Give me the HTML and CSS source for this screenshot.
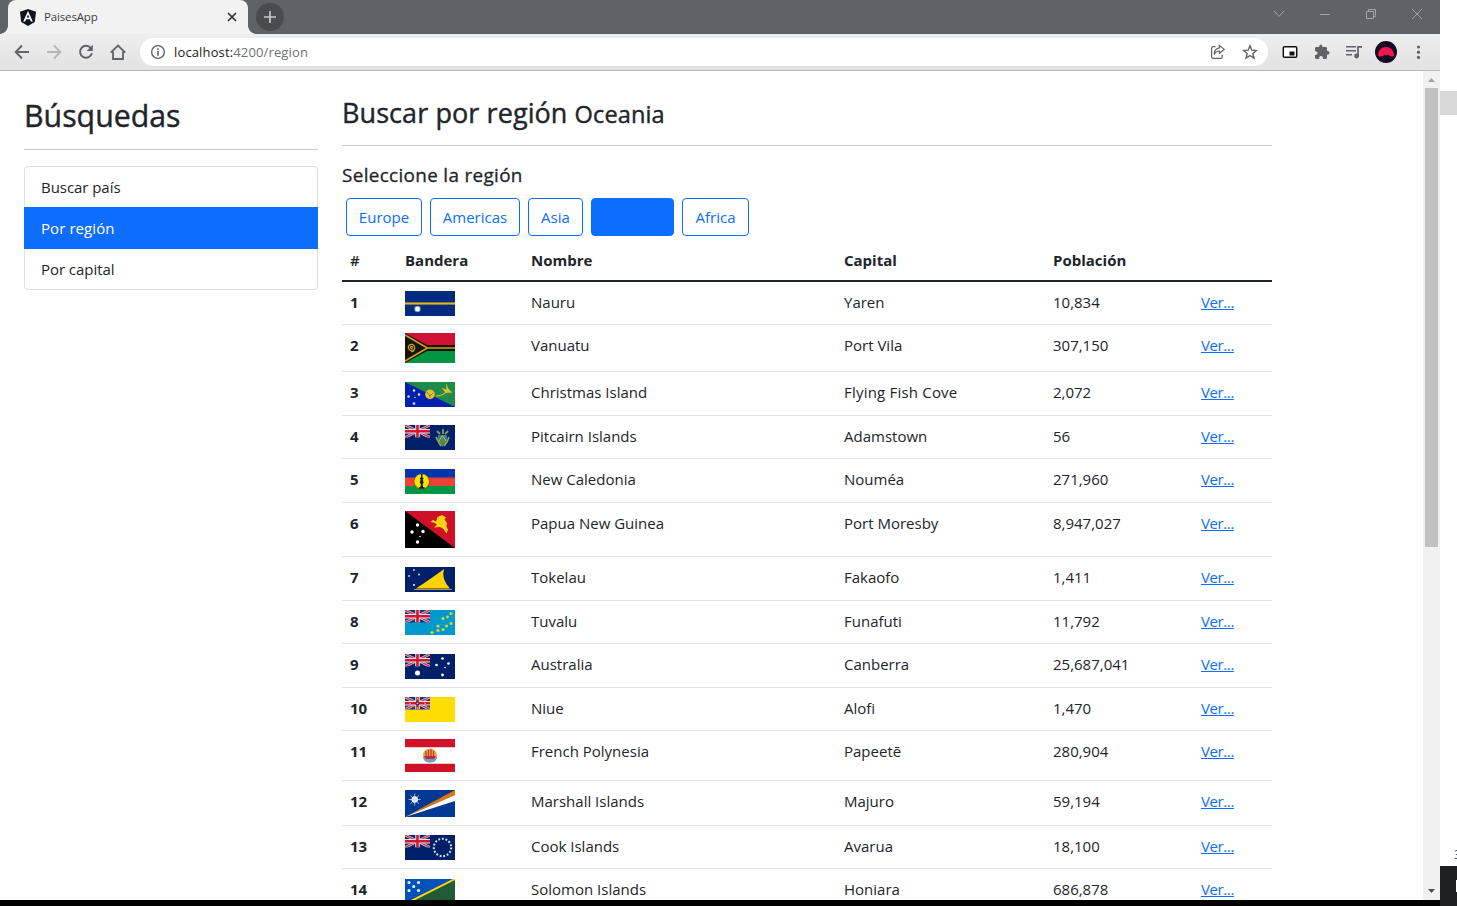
FILE: index.html
```html
<!DOCTYPE html>
<html lang="es">
<head>
<meta charset="utf-8">
<title>PaisesApp</title>
<link rel="stylesheet" href="styles.css">
</head>
<body>
<svg class="defs" width="0" height="0">
  <symbol id="jack" viewBox="0 0 25 13" preserveAspectRatio="none">
    <path d="M0 0L25 13M25 0L0 13" stroke="#c9cde0" stroke-width="2.8"/>
    <path d="M0 0L25 13M25 0L0 13" stroke="#d2304c" stroke-width="1.2"/>
    <path d="M12.5 0V13M0 6.5H25" stroke="#f3dfe6" stroke-width="4.6"/>
    <path d="M12.5 0V13M0 6.5H25" stroke="#d01732" stroke-width="2.6"/>
  </symbol>
</svg>
<div class="window">
  <div class="tabbar">
    <div class="tab">
      <svg width="16" height="17" viewBox="0 0 16 17"><path d="M8 0L16 2.8L14.8 13L8 17L1.2 13L0 2.8Z" fill="#10151d"/><path d="M8 2L3.2 12.6H5.2L6.1 10.2H9.9L10.8 12.6H12.8ZM8 5.5L9.3 8.6H6.7Z" fill="#fff" fill-rule="evenodd"/></svg>
      <span class="tab-title">PaisesApp</span>
      <svg class="tab-close" width="10" height="10" viewBox="0 0 10 10"><path d="M1 1L9 9M9 1L1 9" stroke="#2d3033" stroke-width="1.7"/></svg>
    </div>
    <div class="newtab"><svg width="12" height="12" viewBox="0 0 12 12"><path d="M6 0V12M0 6H12" stroke="#c6c8ca" stroke-width="1.7"/></svg></div>
    <div class="controls">
      <svg width="12" height="12" viewBox="0 0 12 12"><path d="M1 3L6 8.5L11 3" fill="none" stroke="#a2a5a7"/></svg>
      <svg width="12" height="12" viewBox="0 0 12 12"><path d="M1 6.5H11" stroke="#a2a5a7"/></svg>
      <svg width="12" height="12" viewBox="0 0 12 12"><path d="M1.5 3.5H8.5V10.5H1.5ZM3.5 3.5V1.5H10.5V8.5H8.5" fill="none" stroke="#a2a5a7"/></svg>
      <svg width="12" height="12" viewBox="0 0 12 12"><path d="M1 1L11 11M11 1L1 11" stroke="#a2a5a7"/></svg>
    </div>
  </div>
  <div class="toolbar">
    <svg width="16" height="16" viewBox="0 0 16 16" fill="none" stroke="#5f6368" stroke-width="1.9"><path d="M15 8H2M8 1.5L1.7 8L8 14.5"/></svg>
    <svg width="16" height="16" viewBox="0 0 16 16" fill="none" stroke="#b5b6b8" stroke-width="1.9"><path d="M1 8H14M8 1.5L14.3 8L8 14.5"/></svg>
    <svg width="16" height="16" viewBox="0 0 16 16" fill="none" stroke="#5f6368" stroke-width="1.9"><path d="M12.9 4.2A6 6 0 1 0 13.9 9.2"/><path d="M14.8 0.8V7H8.6Z" fill="#5f6368" stroke="none"/></svg>
    <svg width="16" height="16" viewBox="0 0 16 16" fill="none" stroke="#5f6368" stroke-width="1.8"><path d="M0.7 8.7L8 1.5L15.3 8.7M3 7.5V15H13V7.5"/></svg>
    <div class="omnibox">
      <svg width="16" height="16" viewBox="0 0 16 16"><circle cx="8" cy="8" r="6.4" fill="none" stroke="#5f6368" stroke-width="1.4"/><path d="M7.2 7H8.8V11.7H7.2ZM7.2 4.3H8.8V5.8H7.2Z" fill="#5f6368"/></svg>
      <span class="url">localhost:<span>4200/region</span></span>
      <svg class="share" width="16" height="16" viewBox="0 0 16 16" fill="none" stroke="#5f6368" stroke-width="1.2"><path d="M5.5 2.6H3.2Q1.6 2.6 1.6 4.2V12.7Q1.6 14.3 3.2 14.3H10.6Q12.2 14.3 12.2 12.7V10.8"/><path d="M9.4 1.5L14.2 5.4L9.4 9.2V7Q5.7 7 4.2 10.5Q4.4 4.5 9.4 3.9Z"/></svg>
      <svg class="star" width="16" height="16" viewBox="0 0 16 16" fill="none" stroke="#5f6368" stroke-width="1.4"><path d="M8 1.8L9.8 6.1L14.3 6.5L10.9 9.5L12 14L8 11.6L4 14L5.1 9.5L1.7 6.5L6.2 6.1Z"/></svg>
    </div>
    <div class="tools">
      <svg width="16" height="16" viewBox="0 0 16 16"><rect x="1.3" y="2.7" width="13.4" height="10.6" rx="1" fill="#fff" stroke="#111" stroke-width="1.5"/><rect x="7.5" y="7.5" width="5" height="4" fill="#111"/></svg>
      <svg width="16" height="16" viewBox="0 0 16 16" fill="#5f6368"><path d="M1 4.2Q1 3 2.2 3H5.2Q4.9 .5 6.8 .5Q8.8 .5 8.4 3H11.8Q13 3 13 4.2V7Q15.5 6.7 15.5 8.8Q15.5 10.9 13 10.6V13.8Q13 15 11.8 15H9Q9.2 12.1 7 12.1Q4.9 12.1 5.1 15H2.2Q1 15 1 13.8V10.9Q3.6 11 3.6 9Q3.6 7 1 7.2Z"/></svg>
      <svg width="16" height="16" viewBox="0 0 16 16"><path d="M0 2.8H10M0 6.8H10M0 10.8H6" stroke="#5f6368" stroke-width="1.6"/><path d="M12 12V2.8H16" fill="none" stroke="#5f6368" stroke-width="1.7"/><circle cx="10.6" cy="12" r="2.4" fill="#5f6368"/></svg>
      <svg width="22" height="22" viewBox="0 0 22 22"><circle cx="11" cy="11" r="11" fill="#160a23"/><path d="M3 14.5Q3.5 6 11 6Q18.5 6 19 14.5L17 15.6L14.5 14.8L13 13.6L11.5 14.4L9.5 13.8L8 15L5 15.8Z" fill="#f3164d"/></svg>
      <svg width="16" height="16" viewBox="0 0 16 16" fill="#5f6368"><circle cx="8.5" cy="3" r="1.6"/><circle cx="8.5" cy="8.2" r="1.6"/><circle cx="8.5" cy="13.4" r="1.6"/></svg>
    </div>
  </div>
  <div class="viewport">
    <div class="page">
      <aside class="sidebar">
        <h2>Búsquedas</h2>
        <hr>
        <ul class="menu"><li>Buscar país</li><li class="active">Por región</li><li>Por capital</li></ul>
      </aside>
      <main class="content">
        <h3>Buscar por región <small>Oceania</small></h3>
        <hr>
        <h5>Seleccione la región</h5>
        <div class="regions">
          <button class="w-eu">Europe</button><button class="w-am">Americas</button><button class="w-as">Asia</button><button class="w-oc selected">Oceania</button><button class="w-af">Africa</button>
        </div>
        <table>
          <colgroup><col class="c1"><col class="c2"><col class="c3"><col class="c4"><col class="c5"><col class="c6"></colgroup>
          <thead><tr><th>#</th><th>Bandera</th><th>Nombre</th><th>Capital</th><th>Población</th><th></th></tr></thead>
          <tbody>
          <tr><th>1</th><td><svg class="flag" viewBox="0 0 50 25"><path fill="#002b7f" d="M0 0H50V25H0Z"/><path fill="#8b7a45" d="M0 11H50V14H0Z"/><path fill="#e5b52c" d="M0 12H50V13H0Z"/><circle cx="12.5" cy="18" r="3.2" fill="#8497c4"/><circle cx="12.5" cy="18" r="2.3" fill="#fff"/></svg></td><td>Nauru</td><td>Yaren</td><td>10,834</td><td><a>Ver...</a></td></tr>
          <tr><th>2</th><td><svg class="flag" viewBox="0 0 50 30"><path fill="#d21034" d="M0 0H50V13H0Z"/><path fill="#009543" d="M0 17H50V30H0Z"/><path fill="#17120d" d="M0 0L22 12H50V18H22L0 30Z"/><path d="M0 2L22.5 15L0 28M22 15H50" fill="none" stroke="#c9a020" stroke-width="1.6"/><path d="M7 18Q2.8 17 3.5 13.5Q4.3 10.8 7.5 11.5Q10.2 12.6 9.5 16Q8.5 19 6 18.5M7.7 16Q5 16 6 13.7L8 14" fill="none" stroke="#d0a719" stroke-width="1.3"/></svg></td><td>Vanuatu</td><td>Port Vila</td><td>307,150</td><td><a>Ver...</a></td></tr>
          <tr><th>3</th><td><svg class="flag" viewBox="0 0 50 25"><path fill="#0021ad" d="M0 0H50V25H0Z"/><path fill="#208b49" d="M0 0H50V25Z"/><circle cx="25" cy="12.4" r="4.8" fill="#edbd28"/><path d="M22 10L25 14L28 11M25 14V16" fill="none" stroke="#64913b"/><path d="M31 14Q38 14 41.5 9.5" fill="none" stroke="#dcc03a" stroke-width="1.2"/><path d="M36.5 6L41.5 7.5L41.3 1L43.5 7L47.5 10.5L41 11Z" fill="#dcc03a"/><g fill="#dce3ff"><circle cx="9" cy="8.5" r="1.2"/><circle cx="3.5" cy="14.5" r="1.2"/><circle cx="14" cy="12.5" r="1.2"/><circle cx="9" cy="21.5" r="1.3"/><circle cx="10" cy="15.5" r=".7"/></g></svg></td><td>Christmas Island</td><td class="wide">Flying Fish Cove</td><td>2,072</td><td><a>Ver...</a></td></tr>
          <tr><th>4</th><td><svg class="flag" viewBox="0 0 50 25"><path fill="#00206a" d="M0 0H50V25H0Z"/><use href="#jack" width="25" height="12.5"/><path d="M33 10H42V17L37.5 22L33 17Z" fill="#267fa2"/><path d="M34 17L37.5 11L41 17L37.5 20Z" fill="#4d8a45"/><path d="M32 6L35 9M38 4V9M43 6L40 9M31 12L33 16L36 21M44 12L42 17L39 21" fill="none" stroke="#8c9c55" stroke-width="1.8"/><path d="M34 16L37.5 10.5L41 16" fill="none" stroke="#d4b43d"/></svg></td><td>Pitcairn Islands</td><td>Adamstown</td><td>56</td><td><a>Ver...</a></td></tr>
          <tr><th>5</th><td><svg class="flag" viewBox="0 0 50 25"><path fill="#0035ad" d="M0 0H50V9H0Z"/><path fill="#ed4135" d="M0 8.5H50V17H0Z"/><path fill="#009543" d="M0 17H50V25H0Z"/><circle cx="16.7" cy="12.5" r="7.7" fill="#fae600" stroke="#38301c" stroke-width=".5"/><path d="M16.7 5V19M15 9.5H18.4M14.8 13.5H18.6M13.8 19H19.6" stroke="#17170f" stroke-width="1.5"/><path d="M16.7 7L18.2 12L17.5 16L18.5 19H15L16 16L15.2 12Z" fill="#17170f"/></svg></td><td>New Caledonia</td><td>Nouméa</td><td>271,960</td><td><a>Ver...</a></td></tr>
          <tr><th>6</th><td><svg class="flag" viewBox="0 0 50 37"><path fill="#000" d="M0 0H50V37H0Z"/><path fill="#ce1126" d="M0 0H50V37Z"/><path fill="#fcd116" d="M25.5 11L28 9L31 10.5L32.5 6L37 4L41 6.5L39.5 8.5L42 12L41.5 16L43 18.5L41.5 22.5L38.5 18L35 16L29 16.5L32 13.5L29 11.5Z"/><g fill="#fff"><circle cx="12.5" cy="14" r="1.7"/><circle cx="7" cy="21" r="1.7"/><circle cx="18" cy="20.5" r="1.7"/><circle cx="12.5" cy="31" r="1.7"/><circle cx="15" cy="25.5" r=".8"/></g></svg></td><td>Papua New Guinea</td><td>Port Moresby</td><td>8,947,027</td><td><a>Ver...</a></td></tr>
          <tr><th>7</th><td><svg class="flag" viewBox="0 0 50 25"><path fill="#00206a" d="M0 0H50V25H0Z"/><path fill="#fed100" d="M11 21.5Q27 11 39 2Q36 12 45 21.5Z"/><path d="M9 22.5H47" stroke="#ac9645" stroke-width="1"/><g fill="#dbe1f5"><circle cx="9" cy="3" r=".9"/><circle cx="4" cy="9" r=".9"/><circle cx="14" cy="7.5" r=".9"/><circle cx="9" cy="18" r="1.1"/></g></svg></td><td>Tokelau</td><td>Fakaofo</td><td>1,411</td><td><a>Ver...</a></td></tr>
          <tr><th>8</th><td><svg class="flag" viewBox="0 0 50 25"><path fill="#0099cf" d="M0 0H50V25H0Z"/><path fill="#173477" d="M0 0H25V12.5H0Z"/><use href="#jack" width="25" height="12.5"/><g fill="#d4d72a"><circle cx="46" cy="3.5" r="1.6"/><circle cx="42.5" cy="7" r="1.4"/><circle cx="38" cy="8.5" r="1.6"/><circle cx="46" cy="13.5" r="1.6"/><circle cx="41.5" cy="16" r="1.6"/><circle cx="33" cy="16" r="1.6"/><circle cx="38" cy="19.5" r="1.6"/><circle cx="33" cy="20.5" r="1.6"/><circle cx="27" cy="22.5" r="1.6"/></g></svg></td><td>Tuvalu</td><td>Funafuti</td><td>11,792</td><td><a>Ver...</a></td></tr>
          <tr><th>9</th><td><svg class="flag" viewBox="0 0 50 25"><path fill="#00206a" d="M0 0H50V25H0Z"/><use href="#jack" width="25" height="12.5"/><g fill="#fff"><circle cx="12.5" cy="19" r="2.5"/><circle cx="37.5" cy="4.5" r="1.3"/><circle cx="31.5" cy="11" r="1.3"/><circle cx="43.5" cy="9.5" r="1.3"/><circle cx="37.5" cy="21" r="1.4"/><circle cx="40" cy="13.5" r=".8"/></g></svg></td><td>Australia</td><td>Canberra</td><td>25,687,041</td><td><a>Ver...</a></td></tr>
          <tr><th>10</th><td><svg class="flag" viewBox="0 0 50 25"><path fill="#fedd00" d="M0 0H50V25H0Z"/><path fill="#173477" d="M0 0H25V12.5H0Z"/><use href="#jack" width="25" height="12.5"/><circle cx="12.5" cy="6.3" r="2" fill="#173477"/><g fill="#fedd00"><circle cx="12.5" cy="6.3" r=".9"/><circle cx="5" cy="6.3" r=".8"/><circle cx="20" cy="6.3" r=".8"/><circle cx="12.5" cy="1.8" r=".8"/><circle cx="12.5" cy="11" r=".8"/></g></svg></td><td>Niue</td><td>Alofi</td><td>1,470</td><td><a>Ver...</a></td></tr>
          <tr><th>11</th><td><svg class="flag" viewBox="0 0 50 33"><path fill="#d01229" d="M0 0H50V33H0Z"/><path fill="#fff" d="M0 8.3H50V24.7H0Z"/><circle cx="25" cy="16.5" r="7" fill="#f3a544"/><path d="M18 18H32Q31.5 23.5 25 23.5Q18.5 23.5 18 18Z" fill="#6aa0cc"/><path d="M20 17.5H30L28.5 19.5H21.5ZM21 17V12M23.5 17V11M26 17V10M28.5 17V12" fill="#b7273f" stroke="#c62937" stroke-width="1.2"/></svg></td><td>French Polynesia</td><td>Papeetē</td><td>280,904</td><td><a>Ver...</a></td></tr>
          <tr><th>12</th><td><svg class="flag" viewBox="0 0 50 27"><path fill="#003893" d="M0 0H50V27H0Z"/><path fill="#dd7500" d="M0 27L50 0V5Z"/><path fill="#fff" d="M0 27L50 5V11Z"/><circle cx="9.7" cy="9.5" r="3.2" fill="#fff"/><path d="M9.7 3.5V15.5M3.7 9.5H15.7M5.5 5.3L14 13.7M14 5.3L5.5 13.7" stroke="#c8d4ea" stroke-width=".8"/></svg></td><td>Marshall Islands</td><td>Majuro</td><td>59,194</td><td><a>Ver...</a></td></tr>
          <tr><th>13</th><td><svg class="flag" viewBox="0 0 50 25"><path fill="#00206a" d="M0 0H50V25H0Z"/><use href="#jack" width="25" height="12.5"/><circle cx="37.5" cy="12.5" r="8.7" fill="none" stroke="#dce1f0" stroke-width="2" stroke-dasharray="1.9 1.744"/></svg></td><td>Cook Islands</td><td>Avarua</td><td>18,100</td><td><a>Ver...</a></td></tr>
          <tr><th>14</th><td><svg class="flag" viewBox="0 0 50 25"><path fill="#0051ba" d="M0 0H50V25H0Z"/><path fill="#215b33" d="M0 25L50 0V25Z"/><path d="M0 25L50 0" stroke="#fcd116" stroke-width="2"/><g fill="#e5f2ff"><circle cx="4" cy="3.5" r="1.6"/><circle cx="13.5" cy="3.5" r="1.6"/><circle cx="8.7" cy="7.5" r="1.6"/><circle cx="4" cy="11.5" r="1.6"/><circle cx="13.5" cy="11.5" r="1.6"/></g></svg></td><td>Solomon Islands</td><td>Honiara</td><td>686,878</td><td><a>Ver...</a></td></tr>
          </tbody>
        </table>
      </main>
    </div>
    <div class="scrollbar">
      <svg width="17" height="17" viewBox="0 0 17 17"><path d="M5 11L8.5 7L12 11Z" fill="#a3a3a3"/></svg>
      <div class="thumb"></div>
      <svg class="down" width="17" height="17" viewBox="0 0 17 17"><path d="M5 6L8.5 10L12 6Z" fill="#505050"/></svg>
    </div>
  </div>
</div>
<div class="beside">
  <div class="block"></div>
  <div class="digit">3</div>
  <div class="tray"><div class="tray-icon"></div></div>
</div>
</body>
</html>
```
FILE: styles.css
```css
* { box-sizing: border-box; }
body { margin: 0; height: 906px; display: flex; overflow: hidden; background: #fff; color: #212529; font-family: "Open Sans", "Noto Sans", sans-serif; font-size: 15px; line-height: 24px; }
svg { display: block; flex: none; }
.defs { position: absolute; }
.window { width: 1440px; height: 906px; background: #000; flex: none; display: flex; flex-direction: column; }
.tabbar { height: 34px; background: #5f6368; display: flex; padding-left: 8px; flex: none; }
.tab { width: 240px; height: 34px; background: #f2f2f2; border-radius: 8px 8px 0 0; display: flex; align-items: center; padding: 0 11px 0 12px; position: relative; }
.tab::before, .tab::after { content: ""; position: absolute; bottom: 0; width: 8px; height: 8px; }
.tab::before { left: -8px; background: radial-gradient(circle at 0 0, #5f6368 7.5px, #f0f0f0 8px); }
.tab::after { right: -8px; background: radial-gradient(circle at 100% 0, #5f6368 7.5px, #f0f0f0 8px); }
.tab-title { font-size: 11.5px; letter-spacing: -.15px; margin-left: 8px; color: #3c4043; }
.tab-close { margin-left: auto; }
.newtab { width: 28px; height: 28px; border-radius: 50%; background: #484c4f; margin: 3px 0 0 8px; display: flex; align-items: center; justify-content: center; }
.controls { margin-left: auto; display: flex; gap: 34px; padding: 8px 17px 0 0; }
.toolbar { height: 37px; flex: none; background: linear-gradient(#eeeeee, #e2e2e2); border-bottom: 1px solid #b9b9b9; display: flex; align-items: center; padding-left: 14px; gap: 16px; }
.omnibox { width: 1128px; height: 28px; margin-left: -2px; border-radius: 14px; background: #fff; display: flex; align-items: center; padding: 0 10px; }
.url { margin-left: 8px; font-size: 13px; color: #202124; letter-spacing: .14px; }
.url span { color: #6d7175; }
.share { margin-left: auto; }
.star { margin-left: 16px; }
.tools { display: flex; align-items: center; gap: 16px; margin-left: -2px; }
.tools svg:nth-child(4) { margin: 0 -3px; }
.viewport { height: 829px; background: #fff; display: flex; overflow: hidden; flex: none; }
.page { width: 1423px; display: flex; padding-left: 24px; gap: 24px; }
.sidebar { width: 294px; padding-top: 26px; }
h2, h3, h5 { margin: 0; font-weight: 400; -webkit-text-stroke: .4px #212529; }
h2 { font-size: 30.3px; line-height: 38px; }
hr { border: 0; height: 1px; background: #c8c9ca; margin: 0; }
.sidebar hr { margin: 14px 0 16px; }
.menu { list-style: none; padding: 0; margin: 0; border: 1px solid #dfdfdf; border-radius: 4px; height: 124px; }
.menu li { height: 40px; line-height: 41px; padding-left: 16px; letter-spacing: -.05px; }
.menu .active { height: 42px; line-height: 42px; background: #0d6efd; color: #fff; margin: 0 -1px; padding-left: 17px; letter-spacing: .08px; }
.content { width: 930px; padding-top: 25px; }
h3 { font-size: 27px; letter-spacing: .08px; line-height: 34px; height: 34px; }
h3 small { font-size: 23.6px; }
.content hr { margin: 15px 0 17px; }
h5 { font-size: 18.9px; letter-spacing: .33px; line-height: 24px; -webkit-text-stroke-width: .3px; }
.regions { display: flex; gap: 8px; padding: 11px 4px 5px; }
button { height: 38px; border: 1px solid #0d6efd; border-radius: 4px; background: #fff; color: #0d6efd; font: inherit; padding: 0; }
.selected { background: #0d6efd; }
.w-eu { width: 76px; } .w-am { width: 90px; } .w-as { width: 55px; } .w-oc { width: 83px; } .w-af { width: 67px; }
table { width: 930px; table-layout: fixed; border-collapse: separate; border-spacing: 0; }
.c1 { width: 55px; } .c2 { width: 126px; } .c3 { width: 313px; } .c4 { width: 209px; } .c5 { width: 148px; } .c6 { width: 79px; }
th, td { padding: 8px 8px 0; text-align: left; vertical-align: top; border-bottom: 1px solid #dee2e6; white-space: nowrap; }
thead th { border-bottom: 2px solid #212529; height: 41px; padding-top: 7px; }
th { font-weight: 700; }
thead th:first-child { font-weight: 600; }
.wide { letter-spacing: .2px; }
tbody tr { height: 43px; }
tbody tr:nth-child(2) { height: 47px; }
tbody tr:nth-child(3), tbody tr:nth-child(5), tbody tr:nth-child(7), tbody tr:nth-child(9) { height: 44px; }
tbody tr:nth-child(6) { height: 54px; }
tbody tr:nth-child(11) { height: 50px; }
tbody tr:nth-child(12) { height: 45px; }
.flag { width: 50px; margin-top: 1px; }
tr:nth-child(2) .flag, tr:nth-child(6) .flag, tr:nth-child(11) .flag { margin-top: 0; }
tr:nth-child(3) .flag, tr:nth-child(5) .flag, tr:nth-child(7) .flag, tr:nth-child(9) .flag, tr:nth-child(14) .flag { margin-top: 2px; }
a { color: #0d6efd; text-decoration: underline; letter-spacing: -.4px; }
.scrollbar { width: 17px; background: #f1f1f1; display: flex; flex-direction: column; align-items: center; }
.thumb { width: 13px; height: 459px; background: #c1c1c1; }
.down { margin-top: auto; }
.beside { width: 17px; overflow: hidden; padding-top: 91px; display: flex; flex-direction: column; }
.block { height: 24px; background: #d9d9d9; }
.digit { margin: auto 0 0 14px; font-size: 12px; line-height: 22px; color: #28547c; }
.tray { height: 40px; background: #1e2121; flex: none; padding: 14px 0 0 16px; }
.tray-icon { height: 12px; background: #fff; }
```
